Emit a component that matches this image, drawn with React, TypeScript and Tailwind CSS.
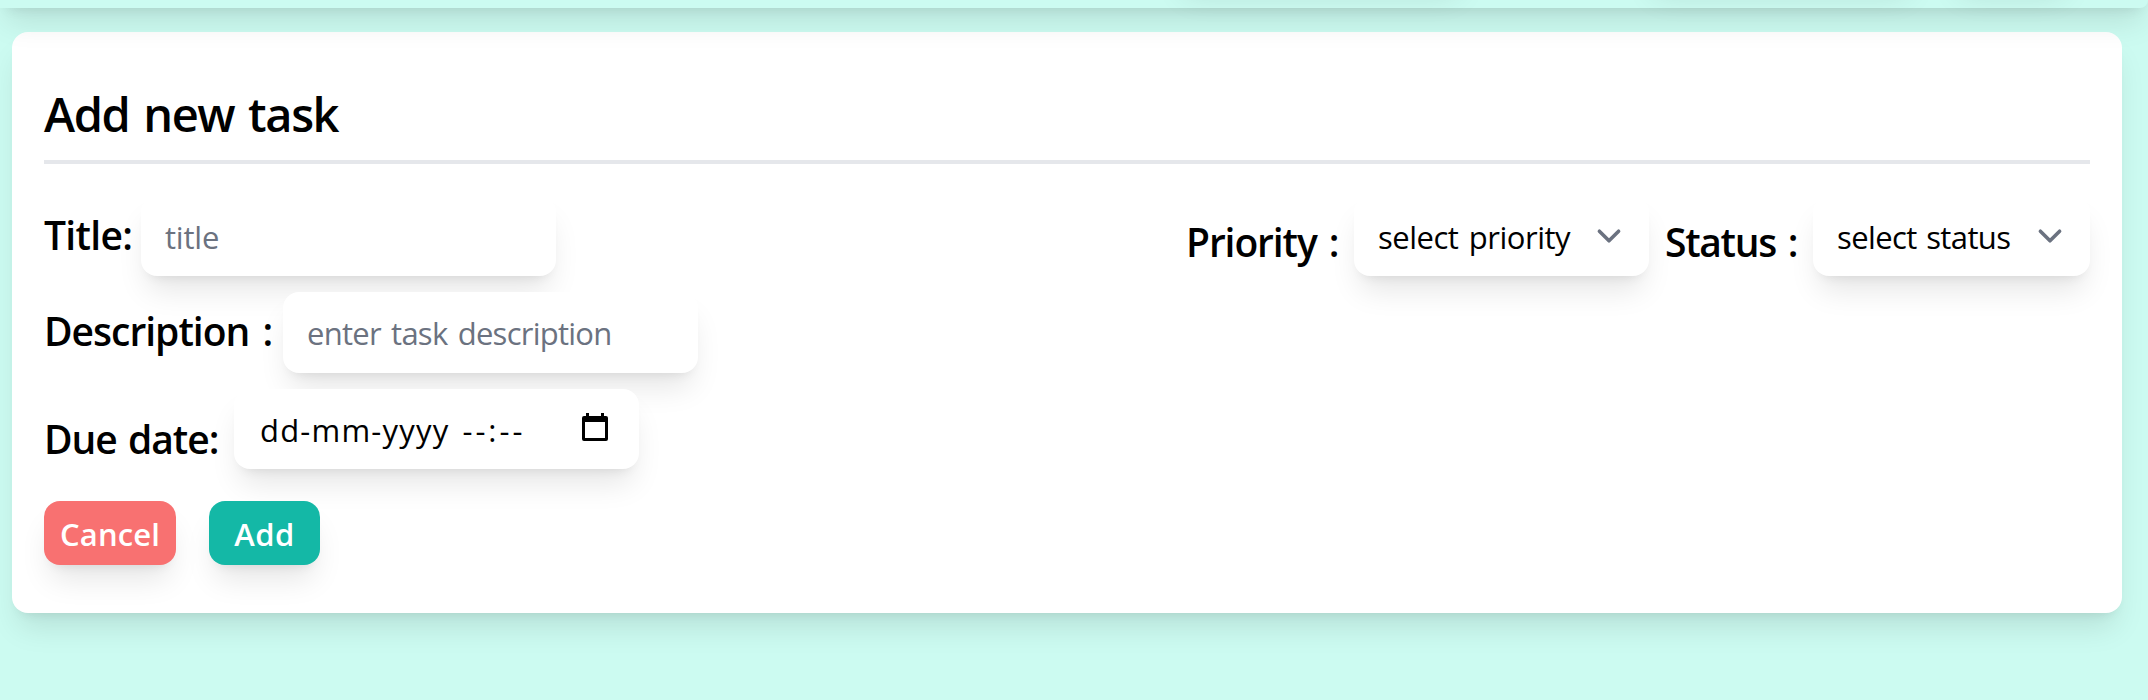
import React from "react";

const lift =
  "shadow-[0_20px_30px_-6px_rgba(0,0,0,0.1),0_8px_12px_-8px_rgba(0,0,0,0.1)]";
const field = "rounded-2xl bg-white text-[31px] font-normal leading-[48px] " + lift;
const label = "shrink-0 whitespace-nowrap text-[39px] font-semibold leading-[56px]";

function Chevron() {
  return (
    <svg
      className="pointer-events-none absolute right-4 top-4 h-12 w-12"
      viewBox="0 0 20 20"
      fill="none"
      stroke="#6b7280"
      strokeWidth="1.5"
      strokeLinecap="round"
      strokeLinejoin="round"
    >
      <path d="M6 8l4 4 4-4" />
    </svg>
  );
}

function Select({ text, size, spacing }: { text: string; size: string; spacing: string }) {
  return (
    <div className={`relative ${size}`}>
      <select
        className={`${field} ${spacing} h-20 w-full appearance-none pl-6 pr-[70px] pt-[2px] text-black outline-none`}
      >
        <option>{text}</option>
      </select>
      <Chevron />
    </div>
  );
}

export default function App() {
  return (
    <div className="flex h-[700px] flex-col overflow-hidden bg-[#ccfbf1] font-['Open_Sans','Noto_Sans',sans-serif] text-black">
      <header
        className={`relative z-10 -mt-40 flex h-42 w-full shrink-0 items-end rounded-br-lg bg-[#ccfbf1] ${lift}`}
      >
        <div className="flex h-40 w-full justify-end">
          <div className={`mr-[180px] mt-[70px] h-16 w-[290px] shrink-0 rounded-2xl ${lift}`} />
          <div className={`mr-[36px] mt-[70px] h-16 w-[270px] shrink-0 rounded-2xl ${lift}`} />
          <div className={`mr-[76px] mt-[70px] h-16 w-[120px] shrink-0 rounded-2xl ${lift}`} />
        </div>
      </header>

      <main className={`ml-3 mt-6 h-[581px] w-[2110px] shrink-0 rounded-2xl bg-white px-8 ${lift}`}>
        <h1 className="h-32 pt-[50px] text-[47px] font-semibold leading-[64px] tracking-[-1.4px] [word-spacing:3px]">
          Add new task
        </h1>
        <hr className="h-1 border-0 bg-[#e5e7eb]" />

        <form className="mt-8 flex flex-col gap-4">
          <div className="flex justify-between">
            <div className="flex">
              <label className={`${label} w-[97px] pt-[11px] tracking-[-0.7px]`}>Title:</label>
              <input
                placeholder="title"
                className={`${field} h-20 w-[415px] px-6 pt-[2px] tracking-[-0.2px] outline-none placeholder:text-[#6b7280]`}
              />
            </div>
            <div className="flex">
              <label className={`${label} w-[168px] pt-[18px] tracking-[-1.1px] [word-spacing:3px]`}>Priority :</label>
              <Select text="select priority" size="w-[295px]" spacing="tracking-[-0.5px] [word-spacing:3px]" />
              <label className={`${label} ml-4 w-[148px] pt-[18px] tracking-[-1.3px] [word-spacing:3px]`}>Status :</label>
              <Select text="select status" size="w-[277px]" spacing="tracking-[-0.6px] [word-spacing:2px]" />
            </div>
          </div>

          <div className="flex">
            <label className={`${label} w-[239px] pt-[11px] tracking-[-1px] [word-spacing:4px]`}>Description :</label>
            <input
              placeholder="enter task description"
              className={`${field} h-[81px] w-[415px] px-6 pt-[1px] tracking-[-0.75px] outline-none [word-spacing:3px] placeholder:text-[#6b7280]`}
            />
          </div>

          <div className="flex">
            <label className={`${label} w-[190px] pt-[22px] tracking-[-1px] [word-spacing:2px]`}>Due date:</label>
            <div className={`${field} flex h-20 w-[405px] items-center justify-between pl-[26px] pr-[31px]`}>
              <span className="flex gap-[13px] whitespace-nowrap pt-[2px]">
                <span className="tracking-[1.2px]">dd-mm-yyyy</span>
                <span className="tracking-[3px]">--:--</span>
              </span>
              <svg className="-mt-1 h-7 w-[26px]" viewBox="0 0 26 28">
                <path
                  fillRule="evenodd"
                  d="M4 0h3v3h12V0h3v3h2a2 2 0 0 1 2 2v21a2 2 0 0 1-2 2H2a2 2 0 0 1-2-2V5a2 2 0 0 1 2-2h2zM3 9v16h20V9z"
                />
              </svg>
            </div>
          </div>

          <div className="mt-4 flex text-[31px] font-semibold leading-[48px] text-white">
            <button type="button" className={`h-16 w-[132px] rounded-2xl bg-[#f87171] pt-[1px] tracking-[0.1px] ${lift}`}>
              Cancel
            </button>
            <button type="button" className={`ml-[33px] h-16 w-[111px] rounded-2xl bg-[#14b8a6] pt-[1px] tracking-[0.5px] ${lift}`}>
              Add
            </button>
          </div>
        </form>
      </main>
    </div>
  );
}
